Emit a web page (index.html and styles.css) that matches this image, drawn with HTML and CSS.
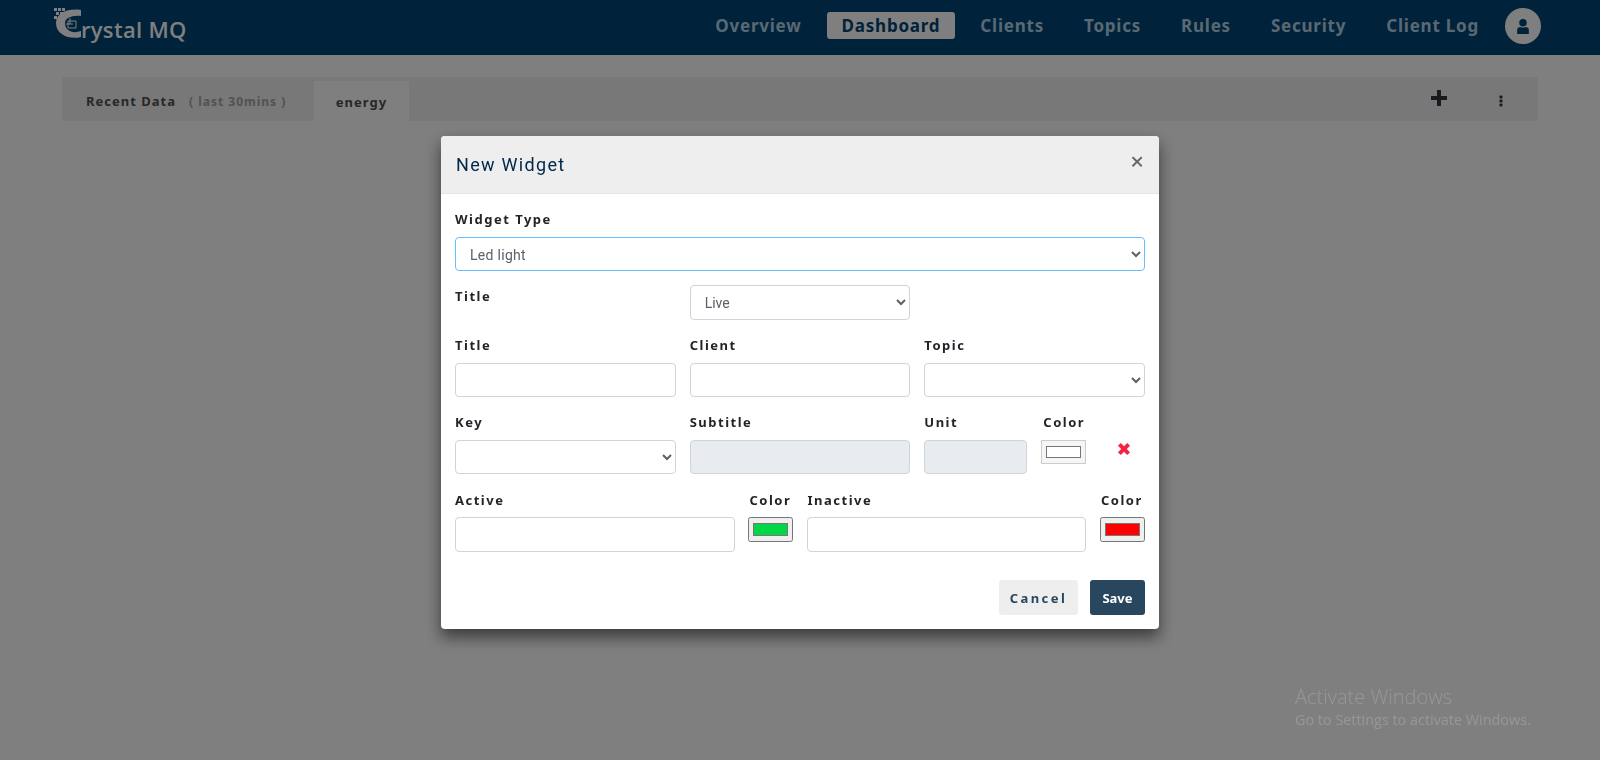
FILE: index.html
```html
<!DOCTYPE html>
<html lang="en">
<head>
<meta charset="utf-8">
<title>Crystal MQ</title>
<link rel="stylesheet" href="styles.css">
</head>
<body>
<header class="navbar">
  <a class="brand">
    <svg class="brand-mark" width="30" height="32" viewBox="0 0 30 32">
      <g fill="#fff">
        <rect x="0" y="0" width="3" height="3"/><rect x="4" y="0" width="3" height="3"/><rect x="8" y="0" width="3" height="3"/>
        <rect x="2" y="4" width="3" height="3"/><rect x="6" y="4" width="3" height="3"/>
        <rect x="0" y="8" width="3" height="3"/><rect x="4" y="8" width="3" height="3"/>
        <rect x="6" y="12" width="3" height="3"/>
      </g>
      <path d="M27 2 C16 0 2 4 2 15 C2 27 16 32 27 29 L27 23 C19 26 11 23 11 15 C11 10 18 7 27 8 Z" fill="#fff"/>
      <path d="M14 13 h8 v7 h-8 z M12 16 h7 M16 10 v6" fill="none" stroke="#fff" stroke-width="1"/>
    </svg>
    <span class="brand-text">rystal MQ</span>
  </a>
  <nav class="nav">
    <a class="nav-link">Overview</a>
    <a class="nav-link active">Dashboard</a>
    <a class="nav-link">Clients</a>
    <a class="nav-link">Topics</a>
    <a class="nav-link">Rules</a>
    <a class="nav-link">Security</a>
    <a class="nav-link">Client Log</a>
  </nav>
  <span class="avatar">
    <svg width="12" height="15" viewBox="0 0 14 18"><circle cx="7" cy="4.500" r="4.500" fill="#004474"/><path d="M0 18 V13 C0 10.500 2 9.500 4 9.500 C5.500 10.500 8.500 10.500 10 9.500 C12 9.500 14 10.500 14 13 V18 Z" fill="#004474"/></svg>
  </span>
</header>

<main class="page">
  <div class="tabs">
    <div class="tab-recent"><b>Recent Data</b><span>( last 30mins )</span></div>
    <div class="tab-energy">energy</div>
    <div class="tab-actions">
      <svg class="icon-plus" width="16" height="16" viewBox="0 0 16 16"><path d="M6 0 h4 v6 h6 v4 h-6 v6 h-4 v-6 h-6 v-4 h6 z" fill="#3a3040"/></svg>
      <svg class="icon-dots" width="4" height="12" viewBox="0 0 4 12"><g fill="#333"><rect x="0.500" y="0.500" width="3" height="3" rx="1"/><rect x="0.500" y="4.500" width="3" height="3" rx="1"/><rect x="0.500" y="8.500" width="3" height="3" rx="1"/></g></svg>
    </div>
  </div>
</main>

<div class="backdrop">
  <section class="modal">
    <div class="modal-header">
      <h2>New Widget</h2>
      <span class="close">×</span>
    </div>
    <div class="modal-body">
      <div class="field first">
        <label>Widget Type</label>
        <select class="control focus"><option>Led light</option></select>
      </div>
      <div class="row row-live">
        <div class="col"><label>Title</label></div>
        <div class="col"><select class="control tall"><option>Live</option></select></div>
        <div class="col"></div>
      </div>
      <div class="row">
        <div class="col"><label>Title</label><input class="control" type="text"></div>
        <div class="col"><label>Client</label><input class="control" type="text"></div>
        <div class="col"><label>Topic</label><select class="control"><option></option></select></div>
      </div>
      <div class="row">
        <div class="col"><label>Key</label><select class="control"><option></option></select></div>
        <div class="col"><label>Subtitle</label><input class="control" type="text" disabled></div>
        <div class="col split">
          <div class="unit"><label>Unit</label><input class="control" type="text" disabled></div>
          <div class="swatch-col"><label>Color</label><input class="swatch" type="color" value="#ffffff" disabled></div>
          <svg class="remove" width="14" height="14" viewBox="0 0 14 14"><path d="M1.500 3.800 L3.800 1.500 L7 4.700 L10.200 1.500 L12.500 3.800 L9.300 7 L12.500 10.200 L10.200 12.500 L7 9.300 L3.800 12.500 L1.500 10.200 L4.700 7 Z" fill="#f5203f" stroke="#f5203f" stroke-linejoin="round"/></svg>
        </div>
      </div>
      <div class="row row-active">
        <div class="grow wide"><label>Active</label><input class="control tall" type="text"></div>
        <div class="swatch-col"><label>Color</label><input class="swatch" type="color" value="#00d646"></div>
        <div class="grow inactive"><label>Inactive</label><input class="control tall" type="text"></div>
        <div class="swatch-col"><label>Color</label><input class="swatch" type="color" value="#ff0000"></div>
      </div>
      <div class="footer">
        <button class="btn btn-cancel" type="button">Cancel</button>
        <button class="btn btn-save" type="button">Save</button>
      </div>
    </div>
  </section>
  <div class="watermark">
    <div class="wm-title">Activate Windows</div>
    <div class="wm-sub">Go to Settings to activate Windows.</div>
  </div>
</div>
</body>
</html>
```
FILE: styles.css
```css
* { box-sizing: border-box; }
html, body { margin: 0; height: 100%; }
body {
  background: #fff;
  font-family: "Noto Sans", "Open Sans", sans-serif;
  overflow: hidden;
}

/* top bar */
.navbar {
  height: 55px;
  background: #004474;
  display: flex;
  align-items: center;
  padding: 0 59px 0 54px;
}
.brand { display: flex; align-items: flex-start; color: #fff; margin-right: auto; height: 40px; }
.brand-text {
  font-family: "Open Sans", sans-serif;
  font-size: 22px;
  font-weight: 600;
  letter-spacing: .3px;
  margin: 6px 0 0 -3px;
  line-height: 30px;
}
.nav { display: flex; align-items: center; gap: 10px; margin: -4px 11px 0 0; }
.nav-link {
  font-size: 17px;
  font-weight: 700;
  letter-spacing: .78px;
  color: #b3d2e6;
  padding: 0 15px;
  height: 27px;
  line-height: 27px;
  border-radius: 3px;
}
.nav-link.active { background: #fff; color: #004474; }
.avatar {
  width: 36px;
  height: 36px;
  border-radius: 50%;
  background: #fff;
  display: flex;
  align-items: center;
  justify-content: center;
  margin-top: -3px;
}

/* tab bar */
.page { padding: 22px 62px 0 62px; }
.tabs {
  height: 44px;
  background: #f0f0f0;
  display: flex;
  align-items: flex-end;
}
.tab-recent {
  height: 44px;
  width: 252px;
  padding: 4px 0 0 24px;
  display: flex;
  align-items: center;
  gap: 13px;
  font-size: 13px;
  letter-spacing: 1px;
}
.tab-recent b { color: #505050; }
.tab-recent span { color: #a4a4a4; font-weight: 700; font-size: 12px; }
.tab-energy {
  width: 95px;
  height: 40px;
  background: #fff;
  text-align: center;
  line-height: 42px;
  font-size: 13px;
  font-weight: 700;
  letter-spacing: 1px;
  color: #505050;
}
.tab-actions { margin-left: auto; height: 44px; display: flex; align-items: center; padding-right: 35px; gap: 52px; }
.icon-plus { margin-top: -3px; }
.icon-dots { margin-top: 3px; }

/* modal layer */
.backdrop {
  position: fixed;
  inset: 0;
  background: rgba(0, 0, 0, .5);
  display: flex;
  justify-content: center;
  align-items: flex-start;
  padding-top: 136px;
}
.modal {
  width: 718px;
  height: 493px;
  background: #fff;
  border-radius: 4px;
  box-shadow: 0 8px 16px rgba(0, 0, 0, .55);
  overflow: hidden;
}
.modal-header {
  height: 58px;
  background: #eee;
  border-bottom: 1px solid #e6e6e6;
  display: flex;
  align-items: center;
  justify-content: space-between;
  padding: 0 15px;
}
.modal-header h2 {
  margin: 0;
  font-family: Roboto, sans-serif;
  font-size: 18px;
  font-weight: 400;
  letter-spacing: 1.3px;
  color: #00274a;
}
.close { font-size: 24px; font-weight: 500; line-height: 1; color: #666; margin: -8px 0 0; }
.modal-body { padding: 16px 14px 0; }
label {
  display: block;
  height: 19px;
  line-height: 19px;
  margin-bottom: 8px;
  font-size: 13px;
  font-weight: 700;
  letter-spacing: 1.5px;
  color: #212529;
}
.control {
  display: block;
  width: 100%;
  height: 34px;
  padding: 0 10px;
  border: 1px solid #ced4da;
  border-radius: 4px;
  background: #fff;
  color: #5a6168;
  font-family: Roboto, sans-serif;
  font-size: 14px;
  outline: 0;
}
.control:disabled { background: #e9ecef; }
.control.focus { border-color: #66bfff; padding-top: 2px; letter-spacing: .3px; }
.control.tall { height: 35px; }
.row { display: flex; gap: 14px; margin-top: 16px; }
.row-live { margin-top: 14px; }
.row-live label { margin-top: 2px; }
.row-active { margin-top: 17px; }
.row-active label { margin-bottom: 7px; }
.col { flex: 1 1 0; min-width: 0; }
.split { display: flex; gap: 14px; }
.unit { width: 103px; }
.grow { flex: 1 1 0; min-width: 0; }
.grow.wide { margin-right: -1px; }
.inactive label { padding-left: 1px; }
.swatch-col { width: 45px; flex: none; }
.swatch-col label { white-space: nowrap; padding-left: 2px; }
.swatch { display: block; width: 45px; height: 25px; padding: 1px 2px; margin: 0; }
.swatch:disabled { height: 24px; border: 1px solid #ccc; background: #f5f5f5; }
.swatch:disabled::-webkit-color-swatch { border-color: #777; }
.remove { align-self: flex-start; margin: 29px 0 0 17px; flex: none; }
.row-active .swatch-col:last-child label { padding-left: 1px; }
.footer { display: flex; justify-content: flex-end; gap: 12px; margin-top: 28px; }
.btn {
  height: 35px;
  border: 0;
  border-radius: 3px;
  font-family: "Noto Sans", sans-serif;
  font-size: 13px;
  font-weight: 700;
}
.btn-cancel { width: 79px; background: #eee; color: #28475f; letter-spacing: 2.4px; padding: 0; }
.btn-save { width: 55px; background: #28475f; color: #fff; padding: 0; }

/* watermark */
.watermark { position: absolute; left: 1295px; top: 684px; color: rgba(255, 255, 255, .18); font-family: "Open Sans", sans-serif; }
.wm-title { font-size: 20px; line-height: 26px; font-weight: 300; }
.wm-sub { font-size: 14.400px; line-height: 19px; }
```
